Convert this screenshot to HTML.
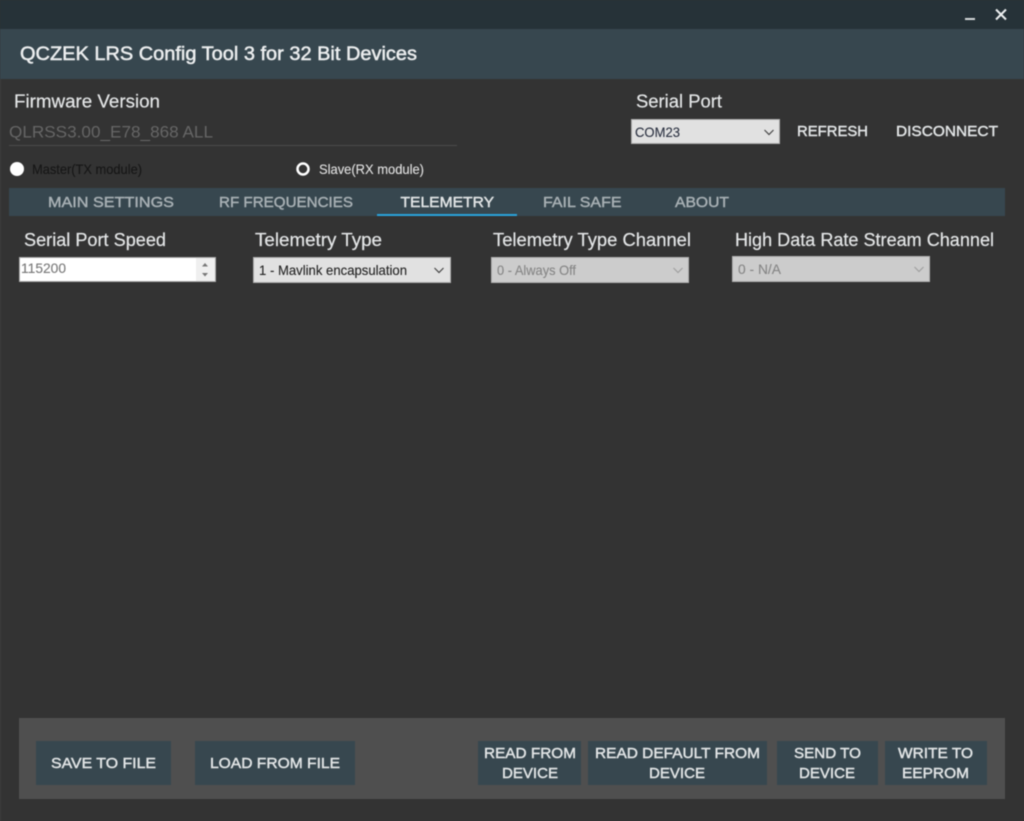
<!DOCTYPE html>
<html><head><meta charset="utf-8"><title>QCZEK LRS Config Tool</title>
<style>
html,body{margin:0;padding:0;background:#333;width:1024px;height:821px;overflow:hidden}
svg{display:block;filter:blur(.45px)}
text{font-family:"Liberation Sans",sans-serif;white-space:pre}
.h{font-size:18px;fill:#e4e6e7;stroke:#e4e6e7;stroke-width:.2}
.b{font-size:15px;fill:#e2e5e6;stroke:#e2e5e6;stroke-width:.45}
.t{font-size:15px;fill:#a8b0b4;stroke:#a8b0b4;stroke-width:.45}
.s{font-size:14px;stroke-width:.1}
</style></head><body>
<svg width="1024" height="821" viewBox="0 0 1024 821" xmlns="http://www.w3.org/2000/svg">
<rect width="1024" height="821" fill="#333"/>
<rect x="0" y="0" width="1" height="821" fill="#3d3d3d"/>
<rect width="1024" height="29" fill="#263238"/>
<rect y="29" width="1024" height="50" fill="#37474f"/>
<rect x="965" y="18" width="10" height="2" fill="#d5d8d9"/>
<path d="M996 9.500L1006 19.500M1006 9.500L996 19.500" stroke="#eceeef" stroke-width="2" fill="none"/>
<text x="20" y="60" font-size="19" fill="#eceeef" stroke="#eceeef" stroke-width=".5" textLength="397" lengthAdjust="spacingAndGlyphs">QCZEK LRS Config Tool 3 for 32 Bit Devices</text>

<text class="h" x="14" y="107.500" textLength="146" lengthAdjust="spacingAndGlyphs">Firmware Version</text>
<text x="9" y="137.500" font-size="17" fill="#666" textLength="204" lengthAdjust="spacingAndGlyphs">QLRSS3.00_E78_868 ALL</text>
<rect x="9" y="145" width="448" height="1" fill="#4b4b4b"/>

<circle cx="17" cy="169" r="7" fill="#fff"/>
<text class="s" x="32" y="174" fill="#161616" stroke="#161616" textLength="110" lengthAdjust="spacingAndGlyphs">Master(TX module)</text>
<circle cx="303" cy="169" r="5.500" fill="#333" stroke="#fff" stroke-width="2.500"/>
<text class="s" x="319" y="174" fill="#e2e2e2" stroke="#e2e2e2" textLength="105" lengthAdjust="spacingAndGlyphs">Slave(RX module)</text>

<text class="h" x="636" y="107.500" textLength="86" lengthAdjust="spacingAndGlyphs">Serial Port</text>
<rect x="631.500" y="119.500" width="148" height="24" fill="#e1e1e1" stroke="#adadad"/>
<text class="s" x="635" y="137" fill="#2a3040" stroke="#2a3040" textLength="45" lengthAdjust="spacingAndGlyphs">COM23</text>
<path d="M764.500 130L769 134.500L773.500 130" stroke="#444" stroke-width="1.200" fill="none"/>
<text class="b" x="797" y="136" textLength="71" lengthAdjust="spacingAndGlyphs">REFRESH</text>
<text class="b" x="896" y="136" textLength="102" lengthAdjust="spacingAndGlyphs">DISCONNECT</text>

<rect x="9" y="188" width="996" height="28" fill="#37474f"/>
<text class="t" x="48" y="207" textLength="126" lengthAdjust="spacingAndGlyphs">MAIN SETTINGS</text>
<text class="t" x="219" y="207" textLength="134" lengthAdjust="spacingAndGlyphs">RF FREQUENCIES</text>
<text class="b" x="400.500" y="207" textLength="93.500" lengthAdjust="spacingAndGlyphs">TELEMETRY</text>
<text class="t" x="543" y="207" textLength="78.500" lengthAdjust="spacingAndGlyphs">FAIL SAFE</text>
<text class="t" x="675" y="207" textLength="54" lengthAdjust="spacingAndGlyphs">ABOUT</text>
<rect x="377" y="214" width="140" height="2" fill="#29a3dc"/>

<text class="h" x="24" y="246" textLength="142" lengthAdjust="spacingAndGlyphs">Serial Port Speed</text>
<text class="h" x="255" y="246" textLength="127" lengthAdjust="spacingAndGlyphs">Telemetry Type</text>
<text class="h" x="493" y="246" textLength="198" lengthAdjust="spacingAndGlyphs">Telemetry Type Channel</text>
<text class="h" x="735" y="246" textLength="259" lengthAdjust="spacingAndGlyphs">High Data Rate Stream Channel</text>

<rect x="19.500" y="257.500" width="196" height="24" fill="#fff" stroke="#aaa"/>
<rect x="196" y="258" width="19" height="23" fill="#efefef"/>
<path d="M202 266.500L205 263L208 266.500ZM202 273L205 276.500L208 273Z" fill="#777"/>
<text class="s" x="21" y="273" fill="#777" stroke="#777" textLength="45" lengthAdjust="spacingAndGlyphs">115200</text>

<rect x="253.500" y="257.500" width="197" height="25" fill="#e1e1e1" stroke="#adadad"/>
<text class="s" x="259" y="275" fill="#222" stroke="#222" textLength="148" lengthAdjust="spacingAndGlyphs">1 - Mavlink encapsulation</text>
<path d="M434.500 268L439 272.500L443.500 268" stroke="#444" stroke-width="1.200" fill="none"/>

<rect x="491.500" y="257.500" width="197" height="25" fill="#ccc" stroke="#b0b0b0"/>
<text class="s" x="497" y="275" fill="#858585" stroke="#858585" textLength="79" lengthAdjust="spacingAndGlyphs">0 - Always Off</text>
<path d="M673.500 268L678 272.500L682.500 268" stroke="#a0a0a0" stroke-width="1.200" fill="none"/>

<rect x="732.500" y="256.500" width="197" height="25" fill="#ccc" stroke="#b0b0b0"/>
<text class="s" x="738" y="274" fill="#858585" stroke="#858585" textLength="43" lengthAdjust="spacingAndGlyphs">0 - N/A</text>
<path d="M914.500 267L919 271.500L923.500 267" stroke="#a0a0a0" stroke-width="1.200" fill="none"/>

<rect x="19" y="718" width="986" height="81" fill="#4f4f4f"/>
<rect x="36" y="741" width="135" height="44" fill="#37474f"/>
<rect x="195" y="741" width="160" height="44" fill="#37474f"/>
<rect x="478" y="741" width="103" height="44" fill="#37474f"/>
<rect x="588" y="741" width="179" height="44" fill="#37474f"/>
<rect x="777" y="741" width="101" height="44" fill="#37474f"/>
<rect x="885" y="741" width="102" height="44" fill="#37474f"/>
<text class="b" x="51" y="768" textLength="105" lengthAdjust="spacingAndGlyphs">SAVE TO FILE</text>
<text class="b" x="210" y="768" textLength="130" lengthAdjust="spacingAndGlyphs">LOAD FROM FILE</text>
<text class="b" x="484" y="758" textLength="92" lengthAdjust="spacingAndGlyphs">READ FROM</text>
<text class="b" x="502" y="778" textLength="56" lengthAdjust="spacingAndGlyphs">DEVICE</text>
<text class="b" x="595" y="758" textLength="165" lengthAdjust="spacingAndGlyphs">READ DEFAULT FROM</text>
<text class="b" x="649" y="778" textLength="56" lengthAdjust="spacingAndGlyphs">DEVICE</text>
<text class="b" x="794" y="758" textLength="67" lengthAdjust="spacingAndGlyphs">SEND TO</text>
<text class="b" x="799" y="778" textLength="56" lengthAdjust="spacingAndGlyphs">DEVICE</text>
<text class="b" x="898" y="758" textLength="75" lengthAdjust="spacingAndGlyphs">WRITE TO</text>
<text class="b" x="902" y="778" textLength="67" lengthAdjust="spacingAndGlyphs">EEPROM</text>
</svg>
</body></html>
